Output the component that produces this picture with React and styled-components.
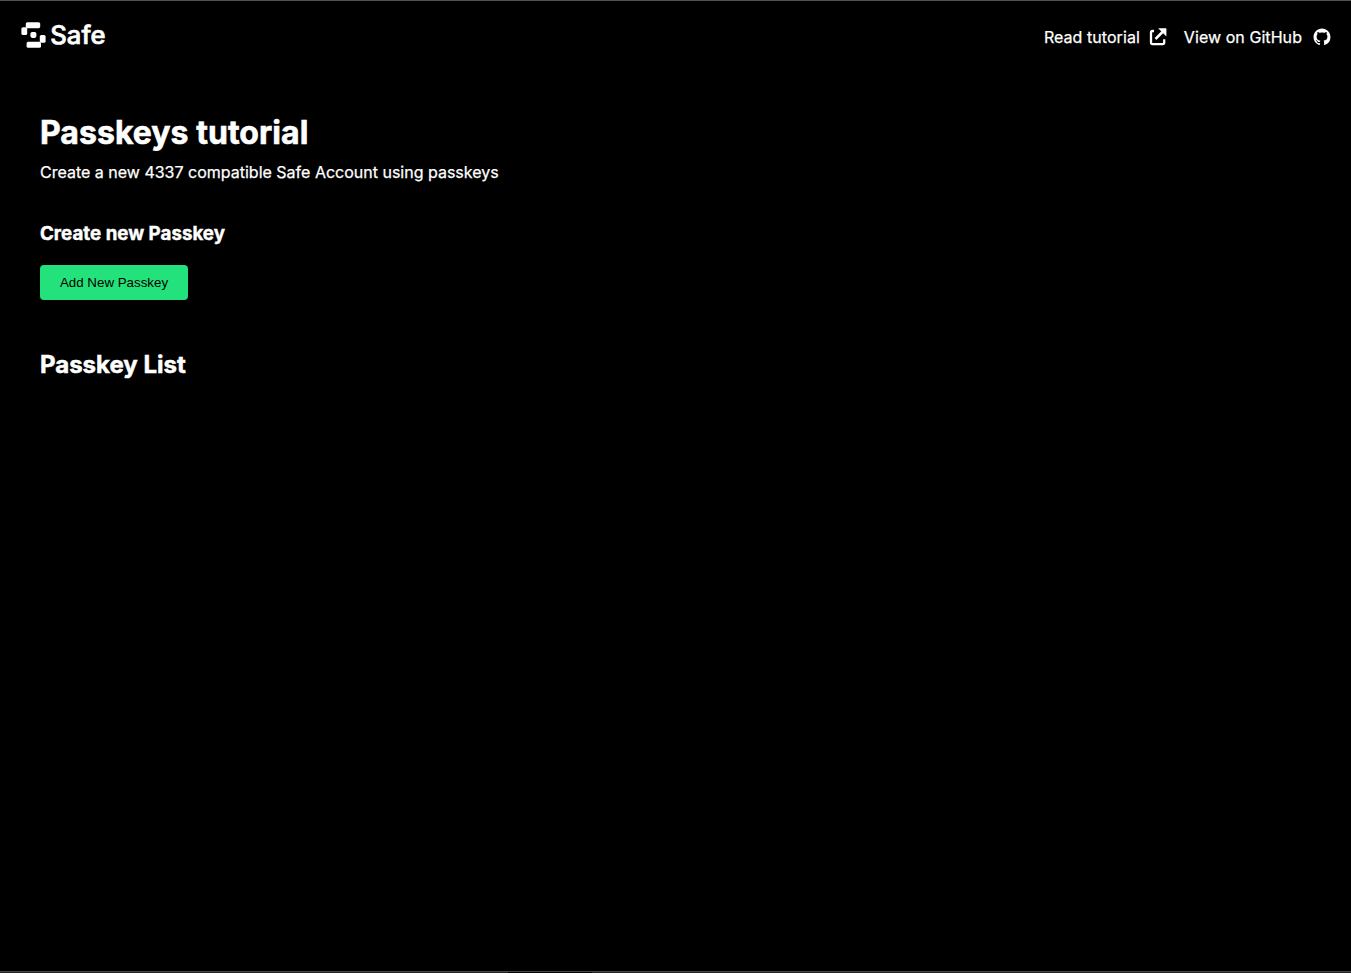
import React from "react";
import styled, { createGlobalStyle } from "styled-components";

const GlobalStyle = createGlobalStyle`
  *, *::before, *::after { box-sizing: border-box; }
  body {
    margin: 0;
    background: #000;
    color: #fff;
    font-family: Inter, "Liberation Sans", sans-serif;
    font-size: 16px;
  }
`;

const Page = styled.div`
  display: flex;
  flex-direction: column;
  height: 973px;
  border-top: 1px solid #515254;
  background: #000;
  overflow: hidden;
`;

const Header = styled.header`
  display: flex;
  align-items: center;
  justify-content: space-between;
  height: 72px;
  padding: 0 20px;
`;

const Brand = styled.a`
  display: flex;
  align-items: center;
  height: 30px;
  margin-bottom: 4px;
`;

const Nav = styled.nav`
  display: flex;
  align-items: center;
  gap: 17px;
`;

const NavLink = styled.a`
  display: flex;
  align-items: center;
  gap: ${(p) => p.$gap}px;
  line-height: 20px;
  letter-spacing: 0.06px;
  -webkit-text-stroke: 0.25px #fff;
  white-space: nowrap;
  svg { display: block; }
`;

const Main = styled.main`
  flex: 1;
  padding: 40px 40px 0;
`;

const Title = styled.h1`
  margin: 0;
  font-size: 32px;
  line-height: 39px;
  font-weight: 700;
  letter-spacing: 0.04px;
  -webkit-text-stroke: 0.6px #fff;
`;

const Lead = styled.p`
  margin: 10px 0 0;
  line-height: 20px;
  -webkit-text-stroke: 0.25px #fff;
`;

const FormTitle = styled.h3`
  margin: 40px 0 0;
  font-size: 18.72px;
  line-height: 23px;
  font-weight: 700;
  letter-spacing: 0.03px;
  -webkit-text-stroke: 0.4px #fff;
`;

const Button = styled.button`
  display: block;
  width: 148px;
  height: 35px;
  margin: 20px 0 0;
  padding: 0;
  border: 0;
  border-radius: 4px;
  background: #23e27b;
  color: #000;
  font: 13.333px "Liberation Sans", Arial, sans-serif;
`;

const ListTitle = styled.h2`
  margin: 50px 0 0;
  font-size: 24px;
  line-height: 29px;
  font-weight: 700;
  -webkit-text-stroke: 0.5px #fff;
`;

const WindowEdge = styled.footer`
  display: flex;
  height: 2px;
  flex: none;
  border-top: 1px solid #464749;
`;

const EdgeSegment = styled.span`
  height: 1px;
  width: ${(p) => p.$width || "auto"};
  flex: ${(p) => (p.$width ? "none" : 1)};
  background: ${(p) => p.$color};
`;

function SafeLogo() {
  return (
    <svg width="88" height="30" viewBox="0 0 88 30" fill="#fff" aria-label="Safe">
      <rect x="5.8" y="2.2" width="14.4" height="6" rx="1.6" />
      <rect x="1.4" y="7.2" width="5.8" height="7.8" rx="1.6" />
      <rect x="6.6" y="21.8" width="14.4" height="6" rx="1.6" />
      <rect x="19.8" y="15" width="5.8" height="7.8" rx="1.6" />
      <rect x="10.4" y="11.9" width="6" height="6" rx="1.8" />
      <text x="30.3" y="24.2" fontFamily="Inter, sans-serif" fontSize="25.5" fontWeight="500" stroke="#fff" strokeWidth="0.7" textLength="55.2" lengthAdjust="spacingAndGlyphs">Safe</text>
    </svg>
  );
}

function ExternalIcon() {
  return (
    <svg width="18" height="18" viewBox="0 0 18 18" fill="none" stroke="#fff">
      <path d="M5 3H3.6Q2 3 2 4.6v9.9q0 1.6 1.6 1.6h10q1.6 0 1.6-1.6v-3.2" strokeWidth="2.3" />
      <path d="M6.5 11 14 3.5" strokeWidth="2.5" />
      <path d="M9.2.2h8.2v8.2z" fill="#fff" stroke="none" />
    </svg>
  );
}

function GithubIcon() {
  return (
    <svg width="18" height="18" viewBox="-0.5 -0.5 17 17" fill="#fff">
      <path d="M8 0C3.58 0 0 3.58 0 8c0 3.54 2.29 6.53 5.47 7.59.4.07.55-.17.55-.38 0-.19-.01-.82-.01-1.49-2.01.37-2.53-.49-2.69-.94-.09-.23-.48-.94-.82-1.13-.28-.15-.68-.52-.01-.53.63-.01 1.08.58 1.23.82.72 1.21 1.87.87 2.33.66.07-.52.28-.87.51-1.07-1.78-.2-3.64-.89-3.64-3.95 0-.87.31-1.59.82-2.15-.08-.2-.36-1.02.08-2.12 0 0 .67-.21 2.2.82.64-.18 1.32-.27 2-.27s1.36.09 2 .27c1.53-1.04 2.2-.82 2.2-.82.44 1.1.16 1.92.08 2.12.51.56.82 1.27.82 2.15 0 3.07-1.87 3.75-3.65 3.95.29.25.54.73.54 1.48 0 1.07-.01 1.93-.01 2.2 0 .21.15.46.55.38A8.01 8.01 0 0 0 16 8c0-4.42-3.58-8-8-8z" />
    </svg>
  );
}

export default function App() {
  return (
    <>
      <GlobalStyle />
      <Page>
        <Header>
          <Brand><SafeLogo /></Brand>
          <Nav>
            <NavLink $gap={9}>Read tutorial<ExternalIcon /></NavLink>
            <NavLink $gap={11}>View on GitHub<GithubIcon /></NavLink>
          </Nav>
        </Header>
        <Main>
          <Title>Passkeys tutorial</Title>
          <Lead>Create a new 4337 compatible Safe Account using passkeys</Lead>
          <FormTitle>Create new Passkey</FormTitle>
          <Button>Add New Passkey</Button>
          <ListTitle>Passkey List</ListTitle>
        </Main>
        <WindowEdge>
          <EdgeSegment $width="508px" $color="#252326" />
          <EdgeSegment $width="84px" $color="#020202" />
          <EdgeSegment $color="#252326" />
        </WindowEdge>
      </Page>
    </>
  );
}
